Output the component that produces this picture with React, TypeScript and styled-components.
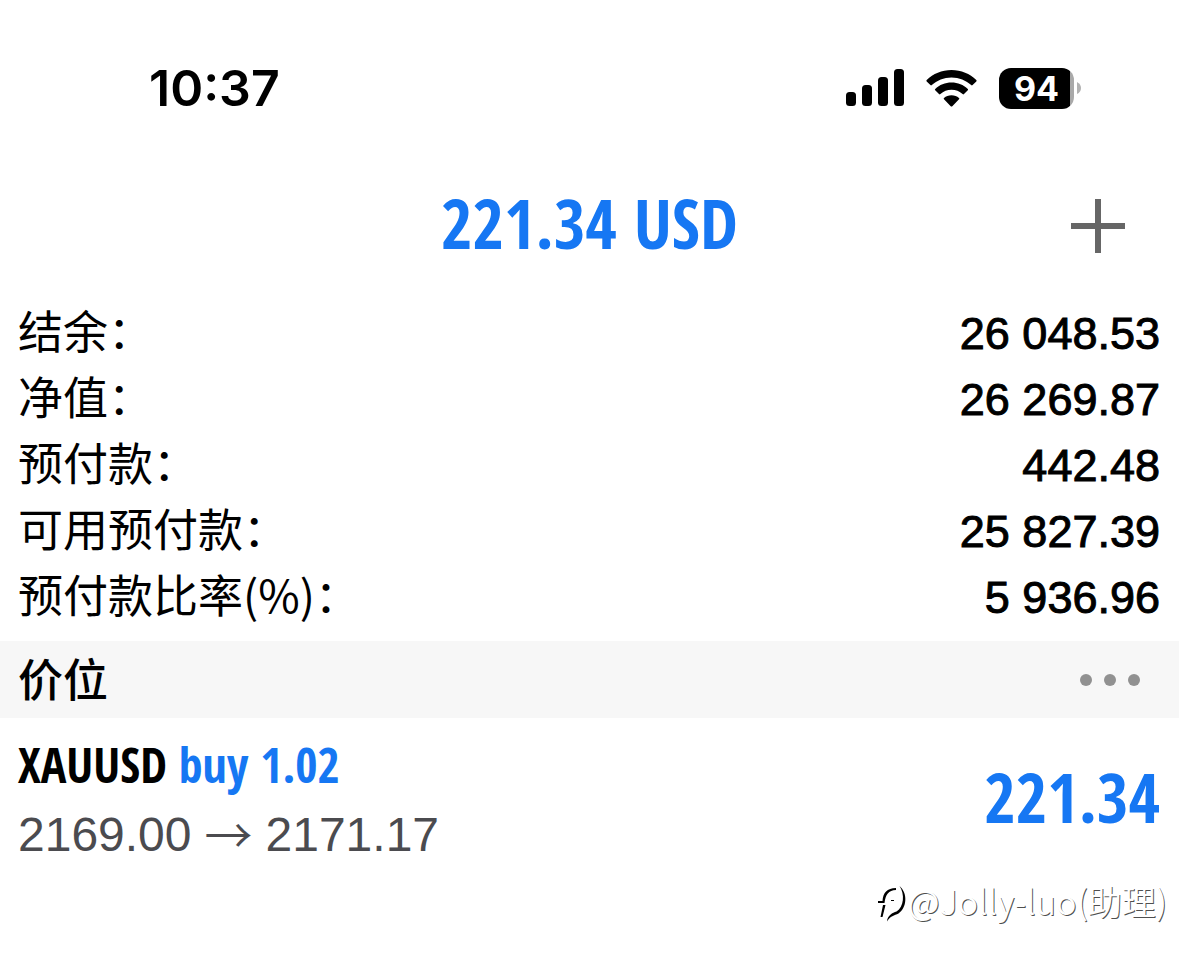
import React from "react";
import styled, { createGlobalStyle } from "styled-components";

const BLUE = "#1677f3";
const CJK = '"Noto Sans CJK SC", sans-serif';
const CONDENSED = '"Open Sans Condensed", "Roboto Condensed", "Noto Sans CJK SC", sans-serif';
const SYSTEM = 'Inter, "Noto Sans CJK SC", sans-serif';
const HELVETICA = '"Liberation Sans", "Noto Sans CJK SC", sans-serif';

const GlobalStyle = createGlobalStyle`
  *, *::before, *::after { box-sizing: border-box; }
  body { margin: 0; background: #fff; color: #000; }
  h1, h2, p, dl, dd, dt { margin: 0; font-weight: inherit; }
`;

const Screen = styled.div`
  width: 100%;
  min-height: 100vh;
  overflow: hidden;
`;

const StatusBar = styled.header`
  display: flex;
  align-items: center;
  justify-content: space-between;
  padding: 58px 97px 0 149px;
`;

const Clock = styled.time`
  font: 600 50px/60px ${SYSTEM};
`;

const StatusIcons = styled.div`
  display: flex;
  align-items: center;
  gap: 22px;
`;

const Battery = styled.div`
  display: flex;
  align-items: center;
  gap: 3px;
`;

const BatteryBody = styled.span`
  width: 75px;
  height: 41px;
  border-radius: 12px;
  background: linear-gradient(to right, #000 71px, #a9a9a9 71px);
  color: #fff;
  font: 700 34px/41px ${SYSTEM};
  text-align: center;
`;

const TitleBar = styled.div`
  display: grid;
  grid-template-columns: 1fr auto 1fr;
  align-items: center;
  padding: 58px 54px 0;
`;

const Profit = styled.h1`
  grid-column: 2;
  padding-bottom: 6px;
  color: ${BLUE};
  font: 700 68px/94px ${CONDENSED};
`;

const IconButton = styled.button`
  display: flex;
  justify-self: end;
  padding: 0;
  border: 0;
  background: none;
`;

const Summary = styled.dl`
  padding: 24px 19px 11px 18px;
`;

const SummaryRow = styled.div`
  display: flex;
  align-items: center;
  justify-content: space-between;
  height: 66px;
`;

const Label = styled.dt`
  padding-bottom: 6px;
  font: 400 45px/60px ${CJK};
`;

const Amount = styled.dd`
  padding-top: 2px;
  font: 400 45px/64px ${HELVETICA};
  -webkit-text-stroke: 1px #000;
`;

const SectionBar = styled.div`
  display: flex;
  align-items: center;
  justify-content: space-between;
  height: 77px;
  padding: 0 38px 0 18px;
  background: #f7f7f7;
`;

const SectionTitle = styled.h2`
  padding-bottom: 4px;
  font: 500 45px/60px ${CJK};
`;

const Position = styled.section`
  display: flex;
  align-items: center;
  justify-content: space-between;
  padding: 12px 19px 0 18px;
`;

const Order = styled.p`
  font: 700 48px/70px ${CONDENSED};
`;

const Side = styled.span`
  color: ${BLUE};
`;

const Prices = styled.p`
  display: flex;
  align-items: center;
  gap: 13px;
  color: #4b4b4f;
  font: 400 48px/70px ${HELVETICA};
`;

const Arrow = styled.span`
  padding-bottom: 6px;
  font: 350 48px/64px ${CJK};
`;

const PositionProfit = styled.strong`
  padding-bottom: 6px;
  color: ${BLUE};
  font: 700 68px/94px ${CONDENSED};
`;

const Watermark = styled.footer`
  display: flex;
  align-items: flex-end;
  justify-content: flex-end;
  padding: 6px 12px 0;
  color: #fff;
  font: 350 34px/50px ${CJK};
  text-shadow: 1px 1px 0 rgba(0, 0, 0, 0.7);
`;

const summary = [
  ["结余：", "26 048.53"],
  ["净值：", "26 269.87"],
  ["预付款：", "442.48"],
  ["可用预付款：", "25 827.39"],
  ["预付款比率(%)：", "5 936.96"],
];

function SignalIcon() {
  return (
    <svg width="58" height="38" viewBox="0 0 58 38" aria-hidden="true">
      <rect x="0" y="23" width="10" height="14" rx="3.5" />
      <rect x="16" y="16" width="10" height="21" rx="3.5" />
      <rect x="32" y="8" width="10" height="29" rx="3.5" />
      <rect x="48" y="0" width="10" height="37" rx="3.5" />
    </svg>
  );
}

function WifiIcon() {
  return (
    <svg width="51" height="37" viewBox="0 0 51 37" aria-hidden="true">
      <path d="M25.5 0C35.2 0 43.9 3.8 50.3 10q.7.7 0 1.4l-3.7 3.7q-.7.7-1.4 0C40.1 10.3 33.1 7.4 25.5 7.4S10.9 10.3 5.8 15.1q-.7.7-1.4 0L.7 11.4Q0 10.7.7 10C7.1 3.8 15.8 0 25.5 0Z" />
      <path d="M25.5 12.5c6.3 0 12 2.4 16.3 6.4q.7.7 0 1.4l-3.8 3.8q-.7.6-1.4 0a16.3 16.3 0 0 0-22.2 0q-.7.6-1.4 0l-3.8-3.8q-.7-.7 0-1.4c4.3-4 10-6.4 16.3-6.4Z" />
      <path d="M25.5 25.2c2.9 0 5.5 1 7.5 2.8q.7.6 0 1.3l-6.7 6.9q-.8.8-1.6 0L18 29.3q-.7-.7 0-1.3c2-1.8 4.6-2.8 7.5-2.8Z" />
    </svg>
  );
}

function WatermarkLogo() {
  return (
    <svg width="31" height="48" viewBox="0 0 31 48" aria-hidden="true">
      <path d="M3.500 39 6 27H8.500L5.500 39ZM1 23h4.500C6 15 10 10 19 10v2C11.500 12 8.500 17 7.500 25H1Z" />
      <path d="M22.500 8c8.500 7 7.500 22-1 27.500-4 2-8.500 2.500-11.500 8 .5-6.500 5.500-8.500 9.500-10C27 29 28 16 22.500 8Z" />
      <path d="M14 22.500h3" stroke="#000" />
    </svg>
  );
}

export default function App() {
  return (
    <Screen>
      <GlobalStyle />
      <StatusBar>
        <Clock>10:37</Clock>
        <StatusIcons>
          <SignalIcon />
          <WifiIcon />
          <Battery>
            <BatteryBody>94</BatteryBody>
            <svg width="5" height="12" viewBox="0 0 5 12" aria-hidden="true">
              <path d="M0 0q4 2 4 6t-4 6Z" fill="#b2b2b2" />
            </svg>
          </Battery>
        </StatusIcons>
      </StatusBar>
      <main>
        <TitleBar>
          <Profit>221.34 USD</Profit>
          <IconButton type="button" aria-label="新增">
            <svg width="54" height="54" viewBox="0 0 54 54">
              <path d="M27 0v54M0 27h54" stroke="#666" strokeWidth="6" />
            </svg>
          </IconButton>
        </TitleBar>
        <Summary>
          {summary.map(([label, value]) => (
            <SummaryRow key={label}>
              <Label>{label}</Label>
              <Amount>{value}</Amount>
            </SummaryRow>
          ))}
        </Summary>
        <SectionBar>
          <SectionTitle>价位</SectionTitle>
          <IconButton type="button" aria-label="更多">
            <svg width="61" height="12" viewBox="0 0 61 12" fill="#919191">
              <circle cx="6" cy="6" r="6" />
              <circle cx="30" cy="6" r="6" />
              <circle cx="54" cy="6" r="6" />
            </svg>
          </IconButton>
        </SectionBar>
        <Position>
          <div>
            <Order>
              XAUUSD <Side>buy 1.02</Side>
            </Order>
            <Prices>
              <span>2169.00</span>
              <Arrow>→</Arrow>
              <span>2171.17</span>
            </Prices>
          </div>
          <PositionProfit>221.34</PositionProfit>
        </Position>
      </main>
      <Watermark>
        <WatermarkLogo />
        <span>@Jolly-luo(助理)</span>
      </Watermark>
    </Screen>
  );
}
